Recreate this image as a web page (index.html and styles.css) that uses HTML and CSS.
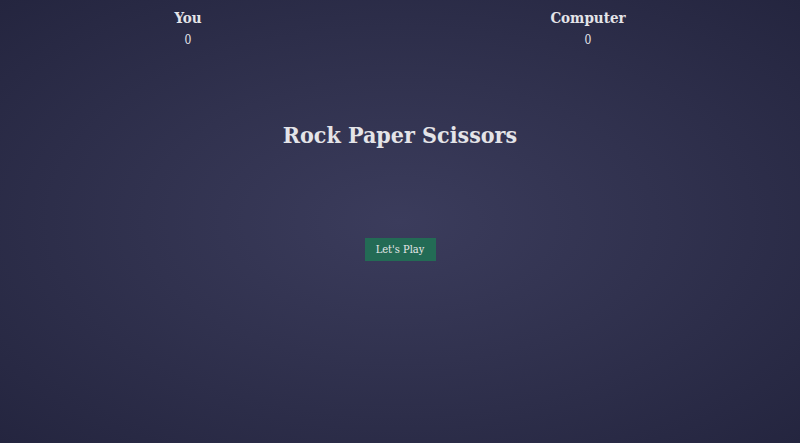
FILE: index.html
```html
<!DOCTYPE html>
<html lang="en">
<head>
<meta charset="utf-8">
<title>Rock Paper Scissors</title>
<link rel="stylesheet" href="styles.css">
</head>
<body>
  <header class="scoreboard">
    <div class="player">
      <h2 class="player-name">You</h2>
      <p class="player-score">0</p>
    </div>
    <div class="player">
      <h2 class="player-name">Computer</h2>
      <p class="player-score">0</p>
    </div>
  </header>
  <main class="intro">
    <h1 class="title">Rock Paper Scissors</h1>
    <button class="play-btn" type="button">Let's Play</button>
  </main>
</body>
</html>
```

FILE: styles.css
```css
html, body {
  margin: 0;
  padding: 0;
  height: 100%;
}

body {
  font-family: "DejaVu Serif Condensed", "DejaVu Serif", serif;
  color: #e4e4e8;
  background: radial-gradient(ellipse at 50% 50%, #3b3c5c 0%, #31324f 45%, #24253f 100%);
  overflow: hidden;
}

.scoreboard {
  display: flex;
  justify-content: space-around;
  padding-top: 8px;
}

.player {
  display: flex;
  flex-direction: column;
  align-items: center;
}

.player-name {
  margin: 0;
  font-size: 15px;
  font-weight: bold;
  line-height: 20px;
}

.player-score {
  margin: 4px 0 0;
  font-size: 12px;
  line-height: 16px;
}

.intro {
  display: flex;
  flex-direction: column;
  align-items: center;
}

.title {
  margin: 70px 0 0;
  font-size: 23px;
  font-weight: bold;
  line-height: 34px;
}

.play-btn {
  margin-top: 86px;
  width: 71px;
  height: 23px;
  padding: 0;
  border: none;
  border-radius: 0;
  background: #236b55;
  color: #e8e8ea;
  font-family: "DejaVu Serif Condensed", "DejaVu Serif", serif;
  font-size: 11px;
}
```
